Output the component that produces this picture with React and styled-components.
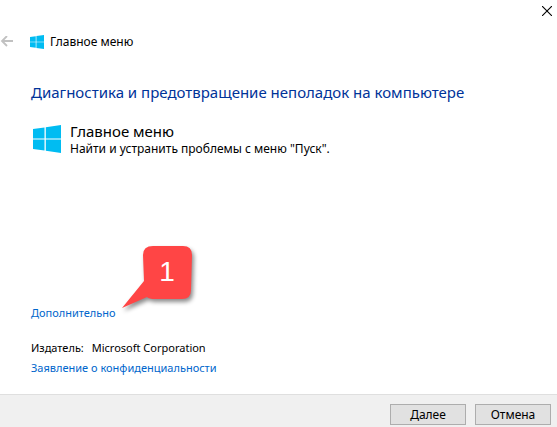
import React from 'react';
import styled, { createGlobalStyle } from 'styled-components';

const GlobalStyle = createGlobalStyle`
    * {
        box-sizing: border-box;
    }
    body {
        margin: 0;
        background: #fff;
        color: #000;
        font-family: 'Noto Sans', 'Open Sans', sans-serif;
        font-size: 12px;
        line-height: 16px;
    }
`;

const WizardBlock = styled.div`
    min-height: 100vh;
    display: flex;
    flex-direction: column;
`;

const TitleBar = styled.div`
    display: flex;
    justify-content: flex-end;
    height: 32px;
    padding: 6px 5px 0 0;
`;

const IconButton = styled.button`
    display: flex;
    padding: 0;
    border: 0;
    background: none;
`;

const Header = styled.header`
    display: flex;
    align-items: center;
    height: 20px;
`;

const AppName = styled.div`
    display: flex;
    align-items: center;
    gap: 6px;
    padding-left: 16px;
`;

const Content = styled.main`
    flex: 1;
    display: flex;
    flex-direction: column;
    padding: 28px 31px 18px;
`;

const Headline = styled.h1`
    margin: 0;
    color: #003399;
    font-size: 15px;
    font-weight: 400;
    line-height: 24px;
`;

const Troubleshooter = styled.section`
    display: flex;
    align-items: center;
    gap: 9px;
    padding: 17px 0 0 2px;
    h2 {
        margin: 0;
        font-size: 15px;
        font-weight: 400;
        line-height: 20px;
    }
    p {
        margin: 0;
    }
`;

const Details = styled.div`
    display: flex;
    flex-direction: column;
    align-items: flex-start;
    gap: 4px;
    margin-top: auto;
    font-size: 11px;
`;

const Publisher = styled.div`
    display: flex;
    gap: 8px;
    padding-top: 15px;
`;

const Link = styled.a`
    position: relative;
    color: #0066cc;
    text-decoration: none;
`;

const Callout = styled.span`
    position: absolute;
    left: 88px;
    bottom: 7px;
    width: 76px;
    height: 68px;
    color: #fff;
    font-family: 'Liberation Sans', Arial, sans-serif;
    font-size: 28px;
    line-height: 52px;
    svg {
        position: absolute;
        inset: 0;
        overflow: visible;
        filter: drop-shadow(2px 3px 2px rgba(0, 0, 0, 0.45));
    }
    span {
        position: absolute;
        top: 0;
        left: 24px;
        width: 48px;
        text-align: center;
    }
`;

const Footer = styled.footer`
    display: flex;
    justify-content: flex-end;
    gap: 9px;
    padding: 9px 6px 2px;
    border-top: 1px solid #dfdfdf;
    background: #f0f0f0;
`;

const Button = styled.button`
    width: 76px;
    height: 21px;
    padding: 0;
    border: 1px solid #adadad;
    background: #e1e1e1;
    color: #000;
    font: inherit;
`;

const WindowsLogo = ({ size }) => (
    <svg width={size} height={size} viewBox="0 0 28 28" fill="#00bcf2" aria-hidden="true">
        <path d="M0 4 11.5 2.4V13.4H0zM12.8 2.2 28 0V13.4H12.8zM0 14.6H11.5V25.6L0 24zM12.8 14.6H28V28L12.8 25.8z" />
    </svg>
);

const App = () => {
    return (
        <WizardBlock>
            <GlobalStyle />
            <TitleBar>
                <IconButton aria-label="Закрыть">
                    <svg width="10" height="10" viewBox="0 0 10 10" stroke="#000" strokeWidth="1.1">
                        <path d="M0 0 10 10M10 0 0 10" />
                    </svg>
                </IconButton>
            </TitleBar>
            <Header>
                <IconButton aria-label="Назад">
                    <svg width="14" height="12" viewBox="0 0 14 12" fill="none" stroke="#c1c1c1" strokeWidth="1.8">
                        <path d="M13 5H2M7 0 2 5l5 5" />
                    </svg>
                </IconButton>
                <AppName>
                    <WindowsLogo size={14} />
                    Главное меню
                </AppName>
            </Header>
            <Content>
                <Headline>Диагностика и предотвращение неполадок на компьютере</Headline>
                <Troubleshooter>
                    <WindowsLogo size={28} />
                    <div>
                        <h2>Главное меню</h2>
                        <p>Найти и устранить проблемы с меню "Пуск".</p>
                    </div>
                </Troubleshooter>
                <Details>
                    <Link href="#advanced">
                        Дополнительно
                        <Callout>
                            <svg width="76" height="68" viewBox="0 0 76 68" fill="#ff4545" aria-hidden="true">
                                <path d="M34 0H64Q73 0 73 9L72 44Q72 53 63 53H36Q30 53 28 51L3 62 25 35 24 9Q24 0 34 0z" />
                            </svg>
                            <span>1</span>
                        </Callout>
                    </Link>
                    <Publisher>
                        <span>Издатель:</span>
                        <span>Microsoft Corporation</span>
                    </Publisher>
                    <Link href="#privacy">Заявление о конфиденциальности</Link>
                </Details>
            </Content>
            <Footer>
                <Button>Далее</Button>
                <Button>Отмена</Button>
            </Footer>
        </WizardBlock>
    );
};

export default App;
